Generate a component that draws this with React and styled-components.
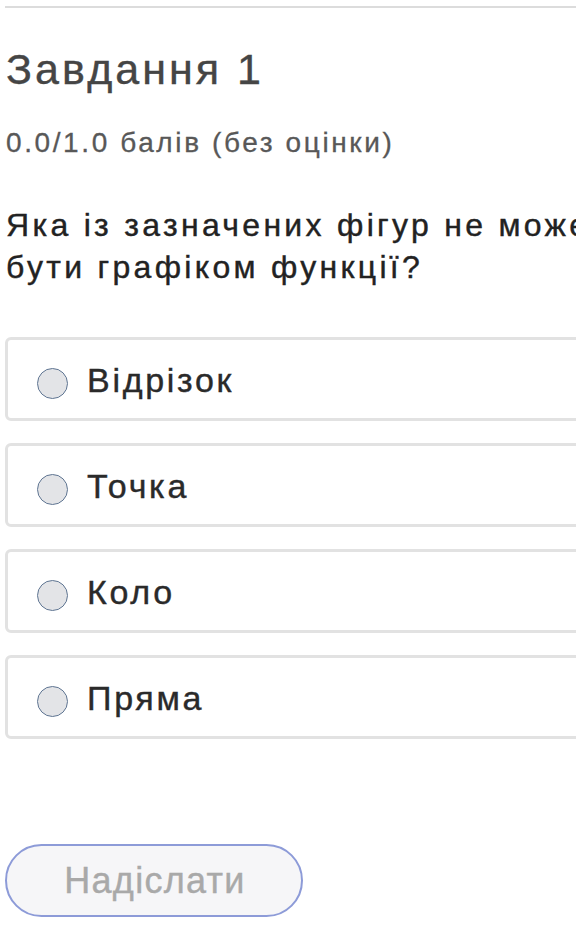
import React from "react";
import styled, { createGlobalStyle } from "styled-components";

const Global = createGlobalStyle`
  html, body { margin: 0; padding: 0; background: #fff; overflow: hidden; }
  body { font-family: "Liberation Sans", Arial, sans-serif; }
`;

const Page = styled.div`
  width: 640px;
  padding: 6px 0 0 5px;
  box-sizing: border-box;
`;

const Rule = styled.div`
  height: 2px;
  background: #dcdcdc;
`;

const Title = styled.h1`
  margin: 37px 0 0 1px;
  font-size: 43px;
  font-weight: 400;
  line-height: 48px;
  letter-spacing: 3px;
  color: #454545;
  -webkit-text-stroke: 0.4px currentColor;
`;

const Score = styled.div`
  margin: 34px 0 0 1px;
  font-size: 28px;
  line-height: 32px;
  letter-spacing: 2.6px;
  color: #585858;
  -webkit-text-stroke: 0.3px currentColor;
`;

const Question = styled.p`
  margin: 45px 0 0 1px;
  font-size: 32px;
  line-height: 42px;
  letter-spacing: 3.3px;
  color: #222;
  -webkit-text-stroke: 0.4px currentColor;
`;

const Options = styled.div`
  margin-top: 49px;
  display: flex;
  flex-direction: column;
  gap: 22px;
`;

const Option = styled.label`
  display: flex;
  align-items: center;
  height: 84px;
  box-sizing: border-box;
  border: 3px solid #e2e2e2;
  border-radius: 6px;
  padding-left: 29px;
  gap: 19px;
`;

const Radio = styled.span`
  width: 31px;
  height: 31px;
  box-sizing: border-box;
  border-radius: 50%;
  border: 1.5px solid #5f7592;
  background: #e3e4e7;
  margin-top: 8px;
  flex: none;
`;

const OptionText = styled.span`
  font-size: 34px;
  line-height: 40px;
  letter-spacing: 2.7px;
  padding-top: 2px;
  color: #2a2a2a;
  -webkit-text-stroke: 0.4px currentColor;
`;

const Submit = styled.button`
  margin-top: 105px;
  width: 298px;
  height: 73px;
  border-radius: 37px;
  border: 2px solid #8d9bd8;
  background: #f6f6f8;
  color: #a9a9a9;
  font-family: "Liberation Sans", Arial, sans-serif;
  font-size: 36px;
  letter-spacing: 1.3px;
  padding: 0 0 0 2px;
  -webkit-text-stroke: 0.4px currentColor;
`;

const options = ["Відрізок", "Точка", "Коло", "Пряма"];

export default function App() {
  return (
    <Page>
      <Global />
      <Rule />
      <Title>Завдання 1</Title>
      <Score>0.0/1.0 балів (без оцінки)</Score>
      <Question>Яка із зазначених фігур не може бути графіком функції?</Question>
      <Options>
        {options.map((o) => (
          <Option key={o}>
            <Radio />
            <OptionText>{o}</OptionText>
          </Option>
        ))}
      </Options>
      <Submit>Надіслати</Submit>
    </Page>
  );
}
